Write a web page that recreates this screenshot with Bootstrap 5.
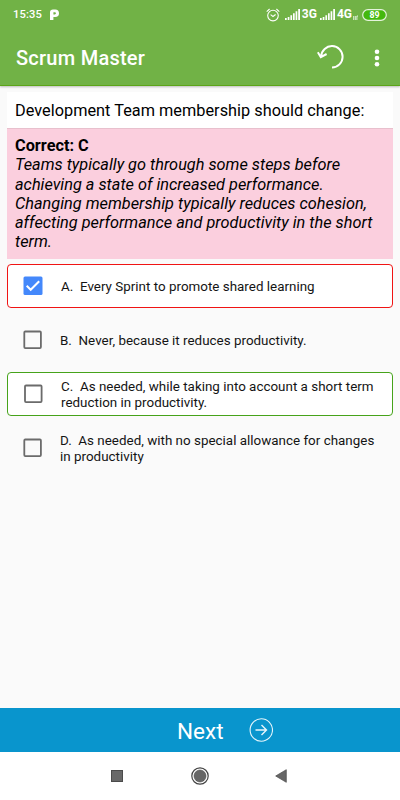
<!DOCTYPE html>
<html lang="en">
<head>
<meta charset="utf-8">
<meta name="viewport" content="width=device-width, initial-scale=1">
<title>Scrum Master</title>
<link href="https://cdn.jsdelivr.net/npm/bootstrap@5.3.0/dist/css/bootstrap.min.css" rel="stylesheet">
<style>
body{font-family:Roboto,"Liberation Sans",sans-serif;background:#fafafa;color:#000;height:800px;overflow:hidden}
svg{display:block;flex:none}
.top-area{background:#71b246;height:86px;border-bottom:1.5px solid #5ca519;box-shadow:0 1px 2px rgba(0,0,0,.25)}
.status-row{height:29px;padding:0 13px;font-size:12px;font-weight:700;line-height:29px}
.status-row .clock{font-size:11.2px;font-weight:500;letter-spacing:.1px}
.status-row .sig{margin:0 2px 0 3px}
.alarm{margin-right:2px}
.data-arrows{margin:5px 4px 0 1px}
.title-row{height:58px;padding:0 16px}
.title-text{font-size:20px;font-weight:500;line-height:58px;letter-spacing:.25px}
.undo-icon{margin-top:-2px}
.more-icon{margin:-1px 4px 0 29px}
.content-area{padding:6px 7px 0}
.question{background:#fff;height:36px;line-height:38px;padding:0 8px;font-size:16.3px;letter-spacing:.02px;white-space:nowrap}
.explain{background:#fbcfde;border-top:1px solid #e8c0cd;height:131px;margin-bottom:5px;padding:7px 8px 0;font-size:16.3px;line-height:19.3px;letter-spacing:.01px;white-space:nowrap}
.option{height:44px;margin-bottom:10px;border:1px solid transparent;border-radius:4px;padding-left:15px;font-size:13.4px;line-height:15.6px;letter-spacing:.01px;color:#141414;white-space:nowrap}
.option .label-text{margin-left:17px;padding-top:1px}
.option.wrong{background:#fff;border-color:#f01414}
.option.right{background:#fff;border-color:#46a31a}
.option.wrong .label-text,.option.right .label-text{margin-left:18px}
.next-bar{background:#0995cd;height:44px;border:0;border-radius:0;padding:0 0 0 177px}
.next-text{font-size:22.5px;line-height:44px;padding-top:2px;width:72px}
.nav-row{height:48px;background:#fff;padding-left:111px}
.home-icon{margin-left:68px}
.back-icon{margin-left:66px}
</style>
</head>
<body class="d-flex flex-column">
<header class="top-area text-white flex-shrink-0">
  <div class="status-row d-flex align-items-center">
    <span class="clock">15:35</span>
    <svg class="ms-2" width="9" height="12" viewBox="0 0 9 12"><path fill="#fff" fill-rule="evenodd" d="M0 11V3.2C0 1.4 1.2.4 3 .4h2.2a3.8 3.8 0 0 1 0 7.6H3.4v3zM3.4 3.2v2.3h1.4a1.15 1.15 0 0 0 0-2.3z"/></svg>
    <div class="ms-auto d-flex align-items-center">
      <svg class="alarm" width="14" height="14" viewBox="0 0 14 14" fill="none" stroke="#fff" stroke-width="1.1"><circle cx="7" cy="7.6" r="5.3"/><path d="M4.6 6.6 7 8.5l2.6-2M.7 3.6 3.6 1M13.3 3.6 10.4 1"/></svg>
      <svg class="sig" width="15" height="11" viewBox="0 0 15 11" fill="#fff"><path d="M0 9h1.7v2H0zM2.7 8h1.7v3H2.7zM5.4 6.2h1.7V11H5.4zM8 4.2h1.7V11H8zM10.6 2.2h1.7V11h-1.7zM13.2 0H15v11h-1.8z"/></svg>
      <span>3G</span>
      <svg class="sig" width="15" height="11" viewBox="0 0 15 11" fill="#fff"><path d="M0 9h1.7v2H0zM2.7 8h1.7v3H2.7zM5.4 6.2h1.7V11H5.4zM8 4.2h1.7V11H8zM10.6 2.2h1.7V11h-1.7zM13.2 0H15v11h-1.8z"/></svg>
      <span>4G</span>
      <svg class="data-arrows" width="5" height="5" viewBox="0 0 5 5" stroke="#fff" stroke-width=".8" fill="none"><path d="M.7 1v4M2.3 1v4M3.9 5V1H5"/></svg>
      <svg width="25" height="12" viewBox="0 0 25 12"><rect x=".7" y=".7" width="23.6" height="10.6" rx="5.3" fill="#43b80d" stroke="#e4f3db" stroke-width="1.2"/><text x="12.5" y="9" text-anchor="middle" font-size="8.8" font-weight="700" fill="#fff">89</text></svg>
    </div>
  </div>
  <div class="title-row d-flex align-items-center">
    <span class="title-text">Scrum Master</span>
    <svg class="undo-icon ms-auto" width="28" height="26" viewBox="0 0 28 26" fill="none" stroke="#fff" stroke-width="2"><path d="M4.2 12.2A10.7 10.7 0 1 1 15 23.5M.8 8.2l3 5L9.6 10"/></svg>
    <svg class="more-icon" width="6" height="18" viewBox="0 0 6 18" fill="#fff"><circle cx="3" cy="2.7" r="2.3"/><circle cx="3" cy="9" r="2.3"/><circle cx="3" cy="15.2" r="2.3"/></svg>
  </div>
</header>
<main class="content-area flex-grow-1">
  <div class="question">Development Team membership should change:</div>
  <div class="explain"><b>Correct: C</b><br><i>Teams typically go through some steps before<br>achieving a state of increased performance.<br>Changing membership typically reduces cohesion,<br>affecting performance and productivity in the short<br>term.</i></div>
  <div class="option wrong d-flex align-items-center">
    <svg width="20" height="20" viewBox="0 0 20 20"><rect x=".5" y=".5" width="19" height="18.5" rx="1.5" fill="#4488fb"/><path d="m3.7 9.8 4 4 8.5-8.6" fill="none" stroke="#fff" stroke-width="2"/></svg>
    <span class="label-text">A.&nbsp; Every Sprint to promote shared learning</span>
  </div>
  <div class="option d-flex align-items-center">
    <svg width="20" height="20" viewBox="0 0 20 20"><rect x="1.3" y="1.5" width="16.6" height="16.6" rx="1" fill="none" stroke="#6b6b6b" stroke-width="1.8"/></svg>
    <span class="label-text">B.&nbsp; Never, because it reduces productivity.</span>
  </div>
  <div class="option right d-flex align-items-center">
    <svg width="20" height="20" viewBox="0 0 20 20"><rect x="2" y="1.5" width="16.6" height="16.6" rx="1" fill="none" stroke="#6b6b6b" stroke-width="1.8"/></svg>
    <span class="label-text">C.&nbsp; As needed, while taking into account a short term<br>reduction in productivity.</span>
  </div>
  <div class="option d-flex align-items-center">
    <svg width="20" height="20" viewBox="0 0 20 20"><rect x="1.3" y="1.5" width="16.6" height="16.6" rx="1" fill="none" stroke="#6b6b6b" stroke-width="1.8"/></svg>
    <span class="label-text">D.&nbsp; As needed, with no special allowance for changes<br>in productivity</span>
  </div>
</main>
<button class="next-bar btn d-flex align-items-center text-white flex-shrink-0 w-100">
  <span class="next-text text-start">Next</span>
  <svg width="24" height="24" viewBox="0 0 24 24" fill="none" stroke="#e6f5fb"><circle cx="12.3" cy="12" r="11.2" stroke-width="1.1"/><path d="M6.5 12h11M12.5 7l5 5-5 5" stroke-width="1.4"/></svg>
</button>
<nav class="nav-row flex-shrink-0 d-flex align-items-center">
  <svg width="12" height="12" viewBox="0 0 12 12"><rect x=".5" y=".5" width="11" height="11" fill="#686868" stroke="#4b4b4b"/></svg>
  <svg class="home-icon" width="18" height="18" viewBox="0 0 18 18"><circle cx="9" cy="9" r="8.2" fill="none" stroke="#444" stroke-width="1.2"/><circle cx="9" cy="9" r="6" fill="#666" stroke="#4b4b4b" stroke-width=".6"/></svg>
  <svg class="back-icon" width="12" height="14" viewBox="0 0 12 14"><path d="M.7 7 11.3.7v12.6z" fill="#666" stroke="#4b4b4b" stroke-width=".7"/></svg>
</nav>
<script src="https://cdn.jsdelivr.net/npm/bootstrap@5.3.0/dist/js/bootstrap.bundle.min.js"></script>
</body>
</html>
